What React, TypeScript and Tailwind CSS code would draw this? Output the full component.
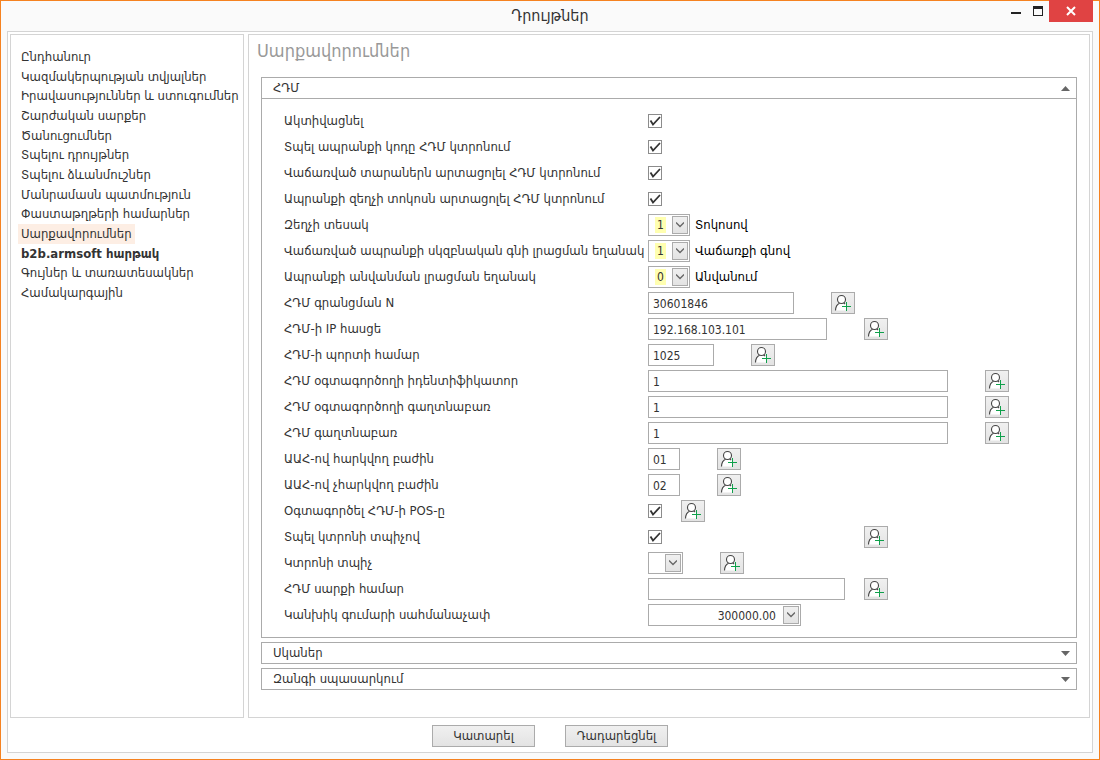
import type { ReactNode } from 'react'

const menu = [
  'Ընդհանուր',
  'Կազմակերպության տվյալներ',
  'Իրավասություններ և ստուգումներ',
  'Շարժական սարքեր',
  'Ծանուցումներ',
  'Տպելու դրույթներ',
  'Տպելու ձևանմուշներ',
  'Մանրամասն պատմություն',
  'Փաստաթղթերի համարներ',
  'Սարքավորումներ',
  'b2b.armsoft հարթակ',
  'Գույներ և տառատեսակներ',
  'Համակարգային',
]

function Chevron() {
  return (
    <span className="flex h-[18px] w-4 items-center justify-center border border-[#ababab] bg-linear-to-b from-[#f0f0f0] to-[#e3e3e3]">
      <svg width="8" height="6" viewBox="0 0 8 6" fill="none" stroke="#666" strokeWidth="1.3">
        <path d="M0 0.5L4 4.5L8 0.5" />
      </svg>
    </span>
  )
}

function UserButton({ label }: { label: string }) {
  return (
    <button type="button" aria-label={label} className="h-[22px] w-6 shrink-0 border border-[#ababab] bg-linear-to-b from-[#f0f0f0] to-[#e3e3e3]">
      <svg width="22" height="20" viewBox="0 0 22 20" fill="none">
        <path d="M3.5 17.5C3.6 13.6 5 11.3 7.6 10.2C9 11 10.6 11 12 10.2L14 11.5V17.5Z" fill="#fff" />
        <path d="M3.5 17.5C3.6 13.6 5 11.3 7.6 10.2M11.6 9.8L13 11" stroke="#444" strokeWidth="1.1" />
        <circle cx="9.5" cy="6.5" r="4" fill="#fff" stroke="#444" strokeWidth="1.1" />
        <path d="M10 13.5H19M14.5 9V18" stroke="#0fa04b" strokeWidth="1" />
      </svg>
    </button>
  )
}

function Row({ id, label, children }: { id: string; label: string; children: ReactNode }) {
  return (
    <div className="grid h-[26px] grid-cols-[364px_1fr] items-center">
      <label htmlFor={id} className="whitespace-nowrap">{label}</label>
      <div className="flex items-center">{children}</div>
    </div>
  )
}

function Check({ id }: { id: string }) {
  return (
    <span className="relative block h-[14px] w-[14px] shrink-0">
      <input id={id} type="checkbox" defaultChecked className="peer block h-[14px] w-[14px] appearance-none border border-[#8c8c8c] bg-white" />
      <svg className="pointer-events-none absolute inset-0 hidden peer-checked:block" width="14" height="14" viewBox="0 0 14 14" fill="none">
        <path d="M2.5 6.5L5 10.5L12 3" stroke="#333" strokeWidth="1.8" />
      </svg>
    </span>
  )
}

function TextBox({ id, value = '', width }: { id: string; value?: string; width: string }) {
  return <input id={id} type="text" defaultValue={value} className={`h-[22px] border border-[#ababab] bg-white px-1 pt-0.5 text-xs ${width}`} />
}

function CodeSelect({ id, value, text }: { id: string; value: string; text: string }) {
  return (
    <>
      <span className="relative">
        <select id={id} defaultValue={value} className="block h-[22px] w-[42px] appearance-none border border-[#ababab] bg-[#ffffb0] bg-clip-content py-0.5 pr-[23px] pl-1.5 text-center text-xs leading-4">
          <option>0</option>
          <option>1</option>
        </select>
        <span className="pointer-events-none absolute top-0.5 right-0.5"><Chevron /></span>
      </span>
      <span className="pl-[5px] text-black">{text}</span>
    </>
  )
}

function SectionHead({ title, open = false }: { title: string; open?: boolean }) {
  return (
    <button type="button" aria-expanded={open} className="flex h-5 w-full items-center justify-between pr-1.5 pl-[11px]">
      <span>{title}</span>
      <svg width="9" height="5" viewBox="0 0 9 5" fill="#666">
        {open ? <path d="M4.5 0L9 5H0Z" /> : <path d="M0 0H9L4.5 5Z" />}
      </svg>
    </button>
  )
}

export default function App() {
  return (
    <div className="flex min-h-screen flex-col border border-[#f58220] bg-[#fafafa] font-['DejaVu_Sans_Condensed','DejaVu_Sans',sans-serif] text-[13px] leading-4 text-[#333]">
      <header className="relative flex h-[30px] items-center justify-center">
        <h1 className="text-base">Դրույթներ</h1>
        <div className="absolute -top-px right-1.5 flex h-[22px]">
          <button type="button" aria-label="Minimize" className="flex w-[22px] justify-center pt-3">
            <svg width="10" height="2"><rect width="10" height="2" fill="#222" /></svg>
          </button>
          <button type="button" aria-label="Maximize" className="flex w-[22px] justify-center pt-1.5">
            <svg width="10" height="10" fill="none"><rect x="0.5" y="0.5" width="9" height="9" stroke="#222" /><rect width="10" height="3" fill="#222" /></svg>
          </button>
          <button type="button" aria-label="Close" className="flex w-11 items-center justify-center bg-[#e04343]">
            <svg width="10" height="10" stroke="#fff" strokeWidth="2"><path d="M1 1L9 9M9 1L1 9" /></svg>
          </button>
        </div>
      </header>

      <div className="mx-1.5 mb-1.5 flex flex-1 flex-col border border-[#d4d4d4] bg-white px-0.5 pt-0.5">
        <div className="flex flex-1 gap-1">
          <nav className="w-[234px] shrink-0 border border-[#d4d4d4] px-[7px] pt-3">
            <ul className="grid h-64 auto-rows-fr">
              {menu.map(item => (
                <li key={item} className="flex">
                  <a
                    href="#"
                    className={`flex items-center px-[3px] whitespace-nowrap ${item === 'Սարքավորումներ' ? 'bg-[#fdeee4]' : ''} ${item.startsWith('b2b') ? 'font-bold' : ''}`}
                  >
                    {item}
                  </a>
                </li>
              ))}
            </ul>
          </nav>

          <main className="flex-1 border border-[#d4d4d4] px-3">
            <h2 className="-ml-1 flex h-[42px] items-start pt-1 text-lg leading-6 text-[#999]">Սարքավորումներ</h2>
            <div className="flex flex-col gap-1">
              <section className="border border-[#ababab]">
                <SectionHead title="ՀԴՄ" open />
                <form className="border-t border-[#ababab] py-[9px] pl-[22px]">
                  <Row id="active" label="Ակտիվացնել"><Check id="active" /></Row>
                  <Row id="code" label="Տպել ապրանքի կոդը ՀԴՄ կտրոնում"><Check id="code" /></Row>
                  <Row id="tare" label="Վաճառված տարաներն արտացոլել ՀԴՄ կտրոնում"><Check id="tare" /></Row>
                  <Row id="discount" label="Ապրանքի զեղչի տոկոսն արտացոլել ՀԴՄ կտրոնում"><Check id="discount" /></Row>
                  <Row id="discountType" label="Զեղչի տեսակ"><CodeSelect id="discountType" value="1" text="Տոկոսով" /></Row>
                  <Row id="priceMode" label="Վաճառված ապրանքի սկզբնական գնի լրացման եղանակ"><CodeSelect id="priceMode" value="1" text="Վաճառքի գնով" /></Row>
                  <Row id="nameMode" label="Ապրանքի անվանման լրացման եղանակ"><CodeSelect id="nameMode" value="0" text="Անվանում" /></Row>
                  <Row id="regNumber" label="ՀԴՄ գրանցման N">
                    <TextBox id="regNumber" value="30601846" width="w-[146px] mr-[37px]" />
                    <UserButton label="ՀԴՄ գրանցման N" />
                  </Row>
                  <Row id="ip" label="ՀԴՄ-ի IP հասցե">
                    <TextBox id="ip" value="192.168.103.101" width="w-[179px] mr-[37px]" />
                    <UserButton label="ՀԴՄ-ի IP հասցե" />
                  </Row>
                  <Row id="port" label="ՀԴՄ-ի պորտի համար">
                    <TextBox id="port" value="1025" width="w-[66px] mr-[37px]" />
                    <UserButton label="ՀԴՄ-ի պորտի համար" />
                  </Row>
                  <Row id="userId" label="ՀԴՄ օգտագործողի իդենտիֆիկատոր">
                    <TextBox id="userId" value="1" width="w-[300px] mr-[37px]" />
                    <UserButton label="ՀԴՄ օգտագործողի իդենտիֆիկատոր" />
                  </Row>
                  <Row id="userPassword" label="ՀԴՄ օգտագործողի գաղտնաբառ">
                    <TextBox id="userPassword" value="1" width="w-[300px] mr-[37px]" />
                    <UserButton label="ՀԴՄ օգտագործողի գաղտնաբառ" />
                  </Row>
                  <Row id="password" label="ՀԴՄ գաղտնաբառ">
                    <TextBox id="password" value="1" width="w-[300px] mr-[37px]" />
                    <UserButton label="ՀԴՄ գաղտնաբառ" />
                  </Row>
                  <Row id="vat" label="ԱԱՀ-ով հարկվող բաժին">
                    <TextBox id="vat" value="01" width="w-8 mr-[37px]" />
                    <UserButton label="ԱԱՀ-ով հարկվող բաժին" />
                  </Row>
                  <Row id="noVat" label="ԱԱՀ-ով չհարկվող բաժին">
                    <TextBox id="noVat" value="02" width="w-8 mr-[37px]" />
                    <UserButton label="ԱԱՀ-ով չհարկվող բաժին" />
                  </Row>
                  <Row id="pos" label="Օգտագործել ՀԴՄ-ի POS-ը">
                    <span className="mr-[19px]"><Check id="pos" /></span>
                    <UserButton label="Օգտագործել ՀԴՄ-ի POS-ը" />
                  </Row>
                  <Row id="usePrinter" label="Տպել կտրոնի տպիչով">
                    <span className="w-[216px]"><Check id="usePrinter" /></span>
                    <UserButton label="Տպել կտրոնի տպիչով" />
                  </Row>
                  <Row id="printer" label="Կտրոնի տպիչ">
                    <span className="relative mr-[37px]">
                      <select id="printer" className="block h-[22px] w-[35px] appearance-none border border-[#ababab] bg-white">
                        <option></option>
                      </select>
                      <span className="pointer-events-none absolute top-0.5 right-0.5"><Chevron /></span>
                    </span>
                    <UserButton label="Կտրոնի տպիչ" />
                  </Row>
                  <Row id="device" label="ՀԴՄ սարքի համար">
                    <TextBox id="device" width="w-[197px] mr-[19px]" />
                    <UserButton label="ՀԴՄ սարքի համար" />
                  </Row>
                  <Row id="cashLimit" label="Կանխիկ գումարի սահմանաչափ">
                    <div className="flex h-[22px] w-[153px] items-center border border-[#ababab] bg-white pr-px">
                      <input id="cashLimit" type="text" defaultValue="300000.00" className="w-full min-w-0 pt-0.5 pr-[7px] text-right text-xs" />
                      <button type="button" aria-label="Հաշվիչ"><Chevron /></button>
                    </div>
                  </Row>
                </form>
              </section>
              <section className="border border-[#ababab]"><SectionHead title="Սկաներ" /></section>
              <section className="border border-[#ababab]"><SectionHead title="Զանգի սպասարկում" /></section>
            </div>
          </main>
        </div>

        <footer className="flex h-[34px] items-center justify-center gap-[30px] pt-0.5">
          <button type="button" className="h-[22px] w-[103px] border border-[#ababab] bg-linear-to-b from-[#f0f0f0] to-[#e3e3e3]">Կատարել</button>
          <button type="button" className="h-[22px] w-[103px] border border-[#ababab] bg-linear-to-b from-[#f0f0f0] to-[#e3e3e3]">Դադարեցնել</button>
        </footer>
      </div>
    </div>
  )
}
